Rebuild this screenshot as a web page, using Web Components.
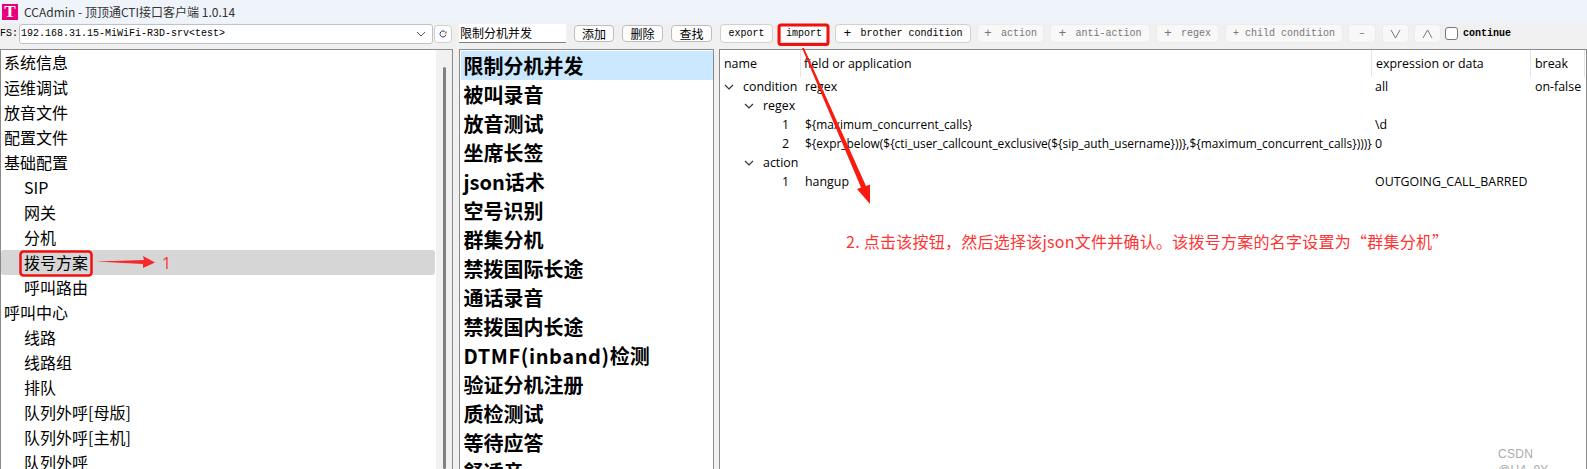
<!DOCTYPE html>
<html lang="zh">
<head>
<meta charset="utf-8">
<title>CCAdmin</title>
<style>
    html, body { margin: 0; height: 100%; overflow: hidden; background: #f0f0f0; }
</style>
</head>
<body>
<cc-app></cc-app>
<script>
const UI_FONT = '"Noto Sans CJK SC", "Noto Sans", sans-serif';
const MONO_FONT = '"Liberation Mono", "Noto Sans CJK SC", monospace';

class CcTitlebar extends HTMLElement {
    constructor() {
        super();
        this.attachShadow({ mode: 'open' });
        this.shadowRoot.innerHTML = `
        <style>
            :host {
                display: flex;
                align-items: center;
                height: 23px;
                padding-left: 2px;
                gap: 6px;
                background: #eff3fa;
                color: #333;
                font: 12px ${UI_FONT};
            }
            .logo {
                width: 16px;
                height: 16px;
                background: #e6007e;
                color: #fff;
                font: bold 17px/16px "Liberation Serif", serif;
                text-align: center;
            }
        </style>
        <span class="logo">T</span><slot></slot>`;
    }
}

class CcButton extends HTMLElement {
    constructor() {
        super();
        this.attachShadow({ mode: 'open' });
        this.shadowRoot.innerHTML = `
        <style>
            :host {
                display: inline-flex;
                align-items: center;
                justify-content: center;
                box-sizing: border-box;
                height: 19px;
                background: #fdfdfd;
                border: 1px solid #d0d0d0;
                border-radius: 4px;
                color: #000;
                font: 10px ${MONO_FONT};
                white-space: pre;
            }
            :host([cjk]) {
                font: 12px ${UI_FONT};
                height: 17px;
                border-color: #bdbdbd;
            }
            :host([off]) {
                background: #f8f8f8;
                border-color: #ececec;
                color: #777;
            }
        </style>
        <slot></slot>`;
    }

    connectedCallback() {
        this.style.width = this.getAttribute('width') + 'px';
    }
}

class CcToolbar extends HTMLElement {
    constructor() {
        super();
        this.attachShadow({ mode: 'open' });
        this.shadowRoot.innerHTML = `
        <style>
            :host {
                display: flex;
                align-items: center;
                box-sizing: border-box;
                height: 26px;
                background: #f0f0f0;
                padding-bottom: 5px;
            }
            .label { width: 19px; font: 10px ${MONO_FONT}; color: #000; }
            .combo {
                box-sizing: border-box;
                display: flex;
                align-items: center;
                justify-content: space-between;
                width: 414px;
                height: 20px;
                padding: 0 6px 0 1px;
                background: #fff;
                border: 1px solid #b9c3cf;
                border-radius: 3px;
                font: 10px ${MONO_FONT};
            }
            .refresh {
                box-sizing: border-box;
                display: flex;
                align-items: center;
                justify-content: center;
                width: 18px;
                height: 18px;
                margin: 0 7px 0 1px;
                background: #fdfdfd;
                border: 1px solid #d0d0d0;
                border-radius: 4px;
            }
            .name {
                box-sizing: border-box;
                width: 107px;
                height: 19px;
                margin-right: 8px;
                padding-left: 1px;
                background: #fff;
                border-bottom: 1px solid #808080;
                font: 12px/18px ${UI_FONT};
                color: #000;
            }
            .row { display: flex; align-items: center; }
            .plus { font-size: 13px; margin-right: 9px; }
            .check {
                box-sizing: border-box;
                width: 13px;
                height: 13px;
                margin: 0 5px 0 0;
                background: #fff;
                border: 1px solid #777;
                border-radius: 3px;
            }
            .cont { font: bold 10px ${MONO_FONT}; color: #000; }
        </style>
        <span class="label">FS:</span>
        <div class="combo">
            <span>192.168.31.15-MiWiFi-R3D-srv&lt;test&gt;</span>
            <svg width="10" height="6" viewBox="0 0 10 6"><path d="M1 1l4 4 4-4" fill="none" stroke="#555"/></svg>
        </div>
        <div class="refresh">
            <svg width="8" height="8" viewBox="0 0 9 9"><path d="M7.800 5.500a3.400 3.400 0 1 1-.6-3.200" fill="none" stroke="#123a7a" stroke-width="1.100"/><path d="M8.600 1v2.800H5.800z" fill="#c46a10"/></svg>
        </div>
        <div class="name">限制分机并发</div>
        <div class="row">
            <cc-button cjk width="40" style="margin-right:8px">添加</cc-button>
            <cc-button cjk width="41" style="margin-right:8px">删除</cc-button>
            <cc-button cjk width="41" style="margin-right:8px">查找</cc-button>
            <cc-button width="53" style="margin-right:7px">export</cc-button>
            <cc-button width="48" style="margin-right:7px">import</cc-button>
            <cc-button width="136" style="margin-right:6px"><span class="plus">+</span>brother condition</cc-button>
            <cc-button off width="67" style="margin-right:6px"><span class="plus">+</span>action</cc-button>
            <cc-button off width="100" style="margin-right:6px"><span class="plus">+</span>anti-action</cc-button>
            <cc-button off width="63" style="margin-right:6px"><span class="plus">+</span>regex</cc-button>
            <cc-button off width="118" style="margin-right:5px">+ child condition</cc-button>
            <cc-button off width="28" style="margin-right:6px">–</cc-button>
            <cc-button off width="27" style="margin-right:5px"><svg width="11" height="10" viewBox="0 0 11 10"><path d="M1 1l4.500 8 4.500-8" fill="none" stroke="#777"/></svg></cc-button>
            <cc-button off width="27" style="margin-right:4px"><svg width="11" height="10" viewBox="0 0 11 10"><path d="M1 9l4.500-8 4.500 8" fill="none" stroke="#777"/></svg></cc-button>
            <span class="check"></span>
            <span class="cont">continue</span>
        </div>`;
    }
}

class CcPanel extends HTMLElement {
    constructor() {
        super();
        this.attachShadow({ mode: 'open' });
        this.shadowRoot.innerHTML = `
        <style>
            :host {
                display: block;
                box-sizing: border-box;
                height: 100%;
                overflow: hidden;
                background: #fff;
                border: 1px solid #8a8a8a;
                border-bottom: 0;
            }
        </style>
        <slot></slot>`;
    }
}

class CcNavItem extends HTMLElement {
    constructor() {
        super();
        this.attachShadow({ mode: 'open' });
        this.shadowRoot.innerHTML = `
        <style>
            :host {
                display: block;
                height: 25px;
                padding-left: 3px;
                border-radius: 3px;
                font: 16px/25px ${UI_FONT};
                color: #000;
                white-space: nowrap;
            }
            :host([child]) { padding-left: 23px; }
            :host([selected]) { background: #d6d6d6; }
        </style>
        <slot></slot>`;
    }
}

class CcNav extends HTMLElement {
    constructor() {
        super();
        this.attachShadow({ mode: 'open' });
        this.shadowRoot.innerHTML = `
        <style>
            :host { display: flex; height: 100%; }
            .list { flex: 1; min-width: 0; }
            .scroll {
                box-sizing: border-box;
                width: 16px;
                height: 100%;
                margin-left: 1px;
                background: #f1f1f1;
                padding: 17px 6px 0 6.500px;
            }
            .thumb { width: 3px; height: 100%; background: #808080; border-radius: 2px; }
        </style>
        <div class="list"><slot></slot></div>
        <div class="scroll"><div class="thumb"></div></div>`;
    }
}

class CcPlanItem extends HTMLElement {
    constructor() {
        super();
        this.attachShadow({ mode: 'open' });
        this.shadowRoot.innerHTML = `
        <style>
            :host {
                display: block;
                height: 29px;
                padding-left: 3px;
                font: bold 20px/29px ${UI_FONT};
                color: #000;
                white-space: nowrap;
            }
            :host([selected]) { background: #cce8ff; }
        </style>
        <slot></slot>`;
    }
}

class CcTreeRow extends HTMLElement {
    constructor() {
        super();
        this.attachShadow({ mode: 'open' });
        const depth = Number(this.getAttribute('depth') || 0);
        const open = this.hasAttribute('open');
        const isIndex = this.hasAttribute('index');
        this.shadowRoot.innerHTML = `
        <style>
            :host {
                display: grid;
                grid-template-columns: 81px 571px 159px 1fr;
                height: 19px;
                font: 12.400px/19px "Open Sans", "Noto Sans", sans-serif;
                color: #000;
                white-space: nowrap;
            }
            .name {
                display: flex;
                align-items: center;
                padding-left: ${4 + depth * 20}px;
                ${isIndex ? 'justify-content: flex-end; padding-right: 12px; padding-left: 0;' : ''}
            }
            svg { flex: none; margin-right: 9px; }
            .c { padding-left: 4px; }
            .c + .c { padding-left: 3px; }
            .c:last-child { padding-left: 4px; }
        </style>
        <div class="name">${open ? '<svg width="10" height="6" viewBox="0 0 10 6"><path d="M1 1l4 4 4-4" fill="none" stroke="#333" stroke-width="1.200"/></svg>' : ''}<slot name="name"></slot></div>
        <div class="c"><slot name="field"></slot></div>
        <div class="c"><slot name="expr"></slot></div>
        <div class="c"><slot name="brk"></slot></div>`;
    }
}

class CcTree extends HTMLElement {
    constructor() {
        super();
        this.attachShadow({ mode: 'open' });
        this.shadowRoot.innerHTML = `
        <style>
            :host { display: block; }
            .head {
                display: grid;
                grid-template-columns: 81px 571px 159px 54px;
                height: 27px;
                font: 12.400px/28px "Open Sans", "Noto Sans", sans-serif;
                color: #000;
            }
            .head div { padding-left: 4px; border-right: 1px solid #e5e5e5; box-sizing: border-box; height: 27px; }
            .head div:nth-child(2) { padding-left: 3px; }
        </style>
        <div class="head">
            <div>name</div>
            <div>field or application</div>
            <div>expression or data</div>
            <div>break</div>
        </div>
        <slot></slot>`;
    }
}

// red marks drawn over the screenshot: boxes, arrows and notes
class CcMarks extends HTMLElement {
    constructor() {
        super();
        this.attachShadow({ mode: 'open' });
        this.shadowRoot.innerHTML = `
        <style>
            :host { position: absolute; inset: 0; pointer-events: none; }
            svg { position: absolute; left: 0; top: 0; }
            .note { position: absolute; color: #f33; white-space: nowrap; }
            .one { left: 162px; top: 251px; font: 16px/24px "Open Sans", sans-serif; }
            .two { left: 846px; top: 231px; font: 16px/20px ${UI_FONT}; letter-spacing: .25px; }
            .mark { position: absolute; left: 1498px; top: 446px; font: 12px/16px "Liberation Sans", sans-serif; letter-spacing: .3px; color: #aaa; }
        </style>
        <svg width="1587" height="469" viewBox="0 0 1587 469">
            <rect x="779" y="25" width="49" height="19.500" rx="2" fill="none" stroke="#f01010" stroke-width="3"/>
            <rect x="20.500" y="251.500" width="71" height="24" rx="3" fill="none" stroke="#f01010" stroke-width="2.500"/>
            <path d="M96 261.500 L144 260 L143 256 L155 262.500 L143 268 L143 264 Z" fill="#f6282a"/>
            <path d="M802 48 L804 48 L866 186 L870 184.500 L870 204 L857 189 L861 187.500 Z" fill="#fb1a10"/>
        </svg>
        <span class="note one">1</span>
        <span class="note two">2. 点击该按钮，然后选择该json文件并确认。该拨号方案的名字设置为“群集分机”</span>
        <span class="mark">CSDN @H4_9Y</span>`;
    }
}

class CcApp extends HTMLElement {
    constructor() {
        super();
        this.attachShadow({ mode: 'open' });
        this.shadowRoot.innerHTML = `
        <style>
            :host {
                display: flex;
                flex-direction: column;
                position: relative;
                width: 1587px;
                height: 469px;
                overflow: hidden;
                background: #f0f0f0;
            }
            .main {
                flex: 1;
                min-height: 0;
                display: grid;
                grid-template-columns: 453px 255px 1fr;
                column-gap: 5.500px;
            }
            .plans { padding: 1px 0 0 1px; }
            .wide { letter-spacing: .6px; }
            .code { font-size: 11.900px; }
        </style>
        <cc-titlebar>CCAdmin - 顶顶通CTI接口客户端 1.0.14</cc-titlebar>
        <cc-toolbar></cc-toolbar>
        <div class="main">
            <cc-panel>
                <cc-nav>
                    <cc-nav-item>系统信息</cc-nav-item>
                    <cc-nav-item>运维调试</cc-nav-item>
                    <cc-nav-item>放音文件</cc-nav-item>
                    <cc-nav-item>配置文件</cc-nav-item>
                    <cc-nav-item>基础配置</cc-nav-item>
                    <cc-nav-item child>SIP</cc-nav-item>
                    <cc-nav-item child>网关</cc-nav-item>
                    <cc-nav-item child>分机</cc-nav-item>
                    <cc-nav-item child selected>拨号方案</cc-nav-item>
                    <cc-nav-item child>呼叫路由</cc-nav-item>
                    <cc-nav-item>呼叫中心</cc-nav-item>
                    <cc-nav-item child>线路</cc-nav-item>
                    <cc-nav-item child>线路组</cc-nav-item>
                    <cc-nav-item child>排队</cc-nav-item>
                    <cc-nav-item child>队列外呼[母版]</cc-nav-item>
                    <cc-nav-item child>队列外呼[主机]</cc-nav-item>
                    <cc-nav-item child>队列外呼</cc-nav-item>
                </cc-nav>
            </cc-panel>
            <cc-panel>
                <div class="plans">
                    <cc-plan-item selected>限制分机并发</cc-plan-item>
                    <cc-plan-item>被叫录音</cc-plan-item>
                    <cc-plan-item>放音测试</cc-plan-item>
                    <cc-plan-item>坐席长签</cc-plan-item>
                    <cc-plan-item>json话术</cc-plan-item>
                    <cc-plan-item>空号识别</cc-plan-item>
                    <cc-plan-item>群集分机</cc-plan-item>
                    <cc-plan-item>禁拨国际长途</cc-plan-item>
                    <cc-plan-item>通话录音</cc-plan-item>
                    <cc-plan-item>禁拨国内长途</cc-plan-item>
                    <cc-plan-item><span class="wide">DTMF(inband)</span>检测</cc-plan-item>
                    <cc-plan-item>验证分机注册</cc-plan-item>
                    <cc-plan-item>质检测试</cc-plan-item>
                    <cc-plan-item>等待应答</cc-plan-item>
                    <cc-plan-item>舒适音</cc-plan-item>
                </div>
            </cc-panel>
            <cc-panel>
                <cc-tree>
                    <cc-tree-row open depth="0"><span slot="name">condition</span><span slot="field">regex</span><span slot="expr">all</span><span slot="brk">on-false</span></cc-tree-row>
                    <cc-tree-row open depth="1"><span slot="name">regex</span></cc-tree-row>
                    <cc-tree-row index><span slot="name">1</span><span slot="field" class="code">\${maximum_concurrent_calls}</span><span slot="expr">\\d</span></cc-tree-row>
                    <cc-tree-row index><span slot="name">2</span><span slot="field" class="code">\${expr_below(\${cti_user_callcount_exclusive(\${sip_auth_username}))},\${maximum_concurrent_calls})))}</span><span slot="expr">0</span></cc-tree-row>
                    <cc-tree-row open depth="1"><span slot="name">action</span></cc-tree-row>
                    <cc-tree-row index><span slot="name">1</span><span slot="field">hangup</span><span slot="expr">OUTGOING_CALL_BARRED</span></cc-tree-row>
                </cc-tree>
            </cc-panel>
        </div>
        <cc-marks></cc-marks>`;
    }
}

customElements.define('cc-titlebar', CcTitlebar);
customElements.define('cc-button', CcButton);
customElements.define('cc-toolbar', CcToolbar);
customElements.define('cc-panel', CcPanel);
customElements.define('cc-nav-item', CcNavItem);
customElements.define('cc-nav', CcNav);
customElements.define('cc-plan-item', CcPlanItem);
customElements.define('cc-tree-row', CcTreeRow);
customElements.define('cc-tree', CcTree);
customElements.define('cc-marks', CcMarks);
customElements.define('cc-app', CcApp);
</script>
</body>
</html>
